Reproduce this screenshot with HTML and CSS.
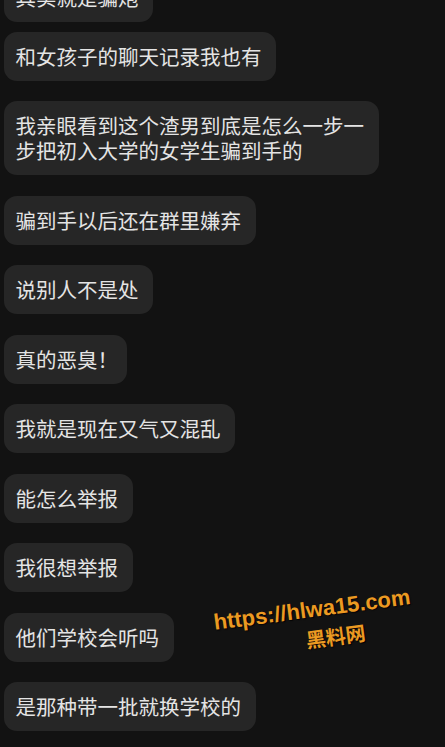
FILE: index.html
```html
<!DOCTYPE html>
<html lang="zh">
    <head>
        <title>聊天记录</title>
        <meta charset="UTF-8">
        <meta name="viewport" content="width=device-width, initial-scale=1">
        <link rel="stylesheet" href="styles.css">
    </head>
    <body>
        <main class="chat">
            <div class="bubble first">其实就是骗炮</div>
            <div class="bubble">和女孩子的聊天记录我也有</div>
            <div class="bubble">我亲眼看到这个渣男到底是怎么一步一<br>步把初入大学的女学生骗到手的</div>
            <div class="bubble">骗到手以后还在群里嫌弃</div>
            <div class="bubble">说别人不是处</div>
            <div class="bubble">真的恶臭<span class="bang">！</span></div>
            <div class="bubble">我就是现在又气又混乱</div>
            <div class="bubble">能怎么举报</div>
            <div class="bubble">我很想举报</div>
            <div class="bubble">他们学校会听吗</div>
            <div class="bubble">是那种带一批就换学校的</div>
        </main>

        <div class="watermark">
            <div class="url">https://hlwa15.com</div>
            <div class="site">黑料网</div>
        </div>
    </body>
</html>
```

FILE: styles.css
```css
html, body {
    margin: 0;
    height: 100%;
    background-color: #121212;
    overflow: hidden;
}

body {
    font-family: 'Noto Sans CJK SC', 'Noto Sans', sans-serif;
    color: #e4e4e4;
    position: relative;
}

.chat {
    display: flex;
    flex-direction: column;
    align-items: flex-start;
    gap: 20.5px;
    padding-left: 3.5px;
}

.bubble {
    background-color: #262626;
    border-radius: 13px;
    padding: 12px 14.5px 12px 12px;
    font-size: 20.5px;
    line-height: 25px;
}

.bubble.first {
    margin-top: -27px;
    margin-bottom: -11px;
}

/* full-width mark sits tight in the original */
.bang {
    letter-spacing: -6px;
}

.watermark {
    position: absolute;
    left: 202px;
    top: 598px;
    width: 220px;
    text-align: center;
    color: #eb9a22;
    font-weight: bold;
    text-shadow: 1px 1px 1px rgba(0, 0, 0, 0.85);
    transform: rotate(-7.5deg);
    transform-origin: 50% 12px;
    white-space: nowrap;
}

    .watermark .url {
        font-family: 'Liberation Sans', Arial, sans-serif;
        font-size: 22px;
        line-height: 24px;
    }

    .watermark .site {
        font-family: 'Noto Sans CJK SC', sans-serif;
        font-size: 20px;
        line-height: 24px;
        margin-top: 5px;
        padding-left: 40px;
    }
```
